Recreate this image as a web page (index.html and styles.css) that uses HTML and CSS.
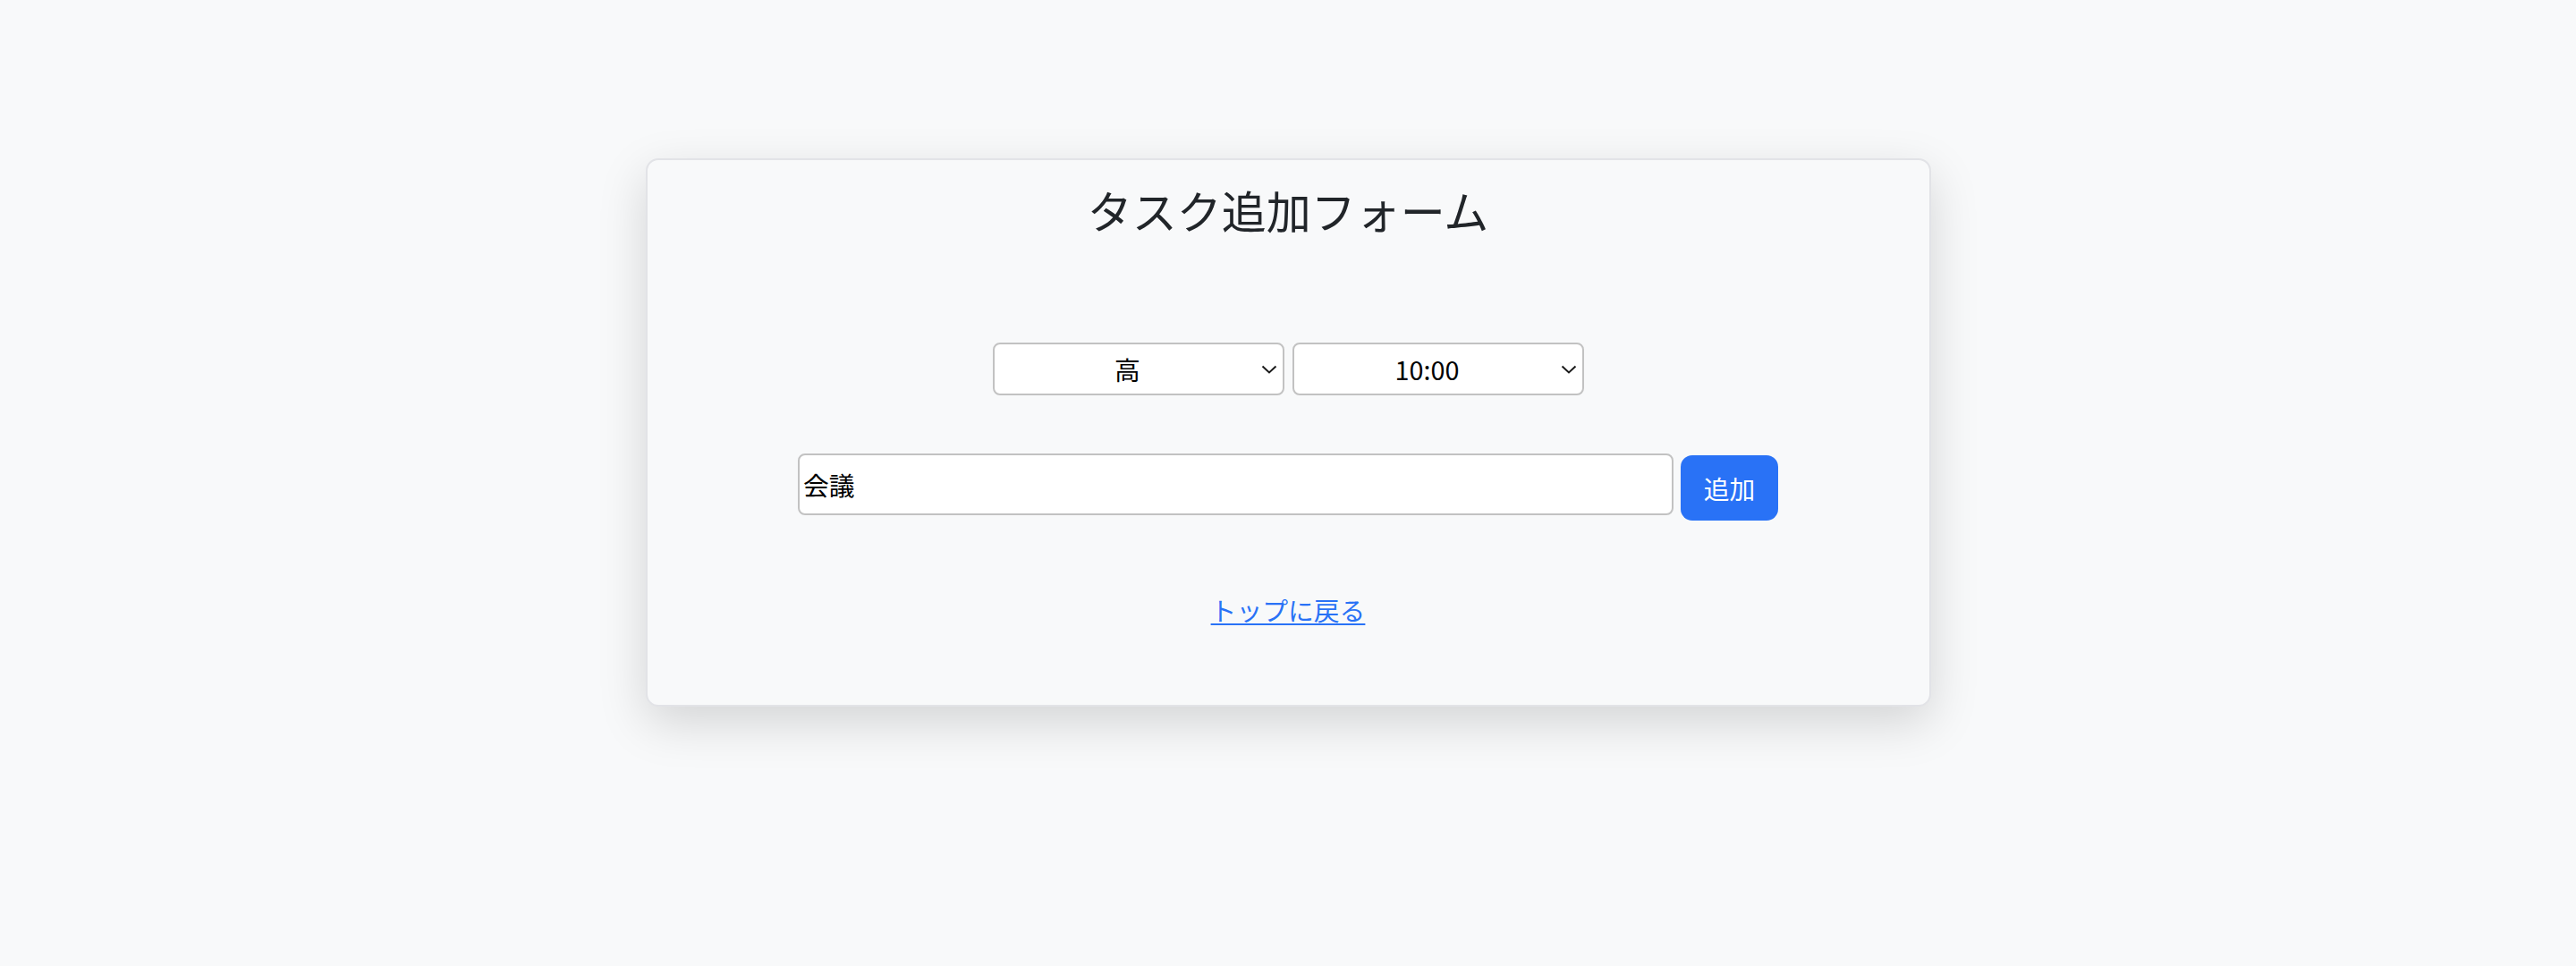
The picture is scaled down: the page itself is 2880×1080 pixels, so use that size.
FILE: index.html
```html
<!DOCTYPE html>
<html lang="ja">
<head>
<meta charset="utf-8">
<title>タスク追加フォーム</title>
<link rel="stylesheet" href="styles.css">
</head>
<body>
<main class="card">
  <h1 class="title">タスク追加フォーム</h1>
  <form class="task-form">
    <div class="select-row">
      <span class="select-wrap">
        <select class="select" name="priority">
          <option selected>高</option>
          <option>中</option>
          <option>低</option>
        </select>
        <svg class="chevron" viewBox="0 0 18 10" aria-hidden="true"><path d="M1.5 1.5 L9 8.5 L16.5 1.5" /></svg>
      </span>
      <span class="select-wrap">
        <select class="select" name="time">
          <option>09:00</option>
          <option selected>10:00</option>
          <option>11:00</option>
        </select>
        <svg class="chevron" viewBox="0 0 18 10" aria-hidden="true"><path d="M1.5 1.5 L9 8.5 L16.5 1.5" /></svg>
      </span>
    </div>
    <div class="add-row">
      <input class="task-input" type="text" value="会議">
      <button class="add-btn" type="button">追加</button>
    </div>
  </form>
  <p class="back"><a href="#" class="back-link">トップに戻る</a></p>
</main>
</body>
</html>
```

FILE: styles.css
```css
* {
  box-sizing: border-box;
}

html, body {
  margin: 0;
  padding: 0;
}

html {
  background: #f8f9fa;
}

body {
  min-height: 100vh;
  padding: 177px 0 120px;
  background: #f8f9fa;
  font-family: "Noto Sans CJK JP", "Noto Sans", sans-serif;
  font-size: 28.8px;
  color: #212529;
}

.card {
  width: 1437px;
  margin: 0 auto;
  padding: 25px 0 85px;
  background: #f8f9fa;
  border: 2px solid #e2e3e7;
  border-radius: 14px;
  box-shadow: 0 18px 54px rgba(0, 0, 0, 0.15);
  display: flex;
  flex-direction: column;
  align-items: center;
}

.title {
  margin: 0;
  font-size: 50px;
  line-height: 60px;
  font-weight: 400;
  color: #212529;
  text-align: center;
}

.task-form {
  display: flex;
  flex-direction: column;
  align-items: center;
}

.select-row {
  margin-top: 119px;
  display: flex;
  gap: 9px;
}

.select-wrap {
  position: relative;
  display: block;
}

.select {
  appearance: none;
  -webkit-appearance: none;
  width: 326px;
  height: 59px;
  margin: 0;
  padding: 0 28px 0 4px;
  border: 2px solid #c2c2c2;
  border-radius: 8px;
  background: #ffffff;
  color: #000000;
  font-family: inherit;
  font-size: 28.8px;
  text-align: center;
  text-align-last: center;
}

.chevron {
  position: absolute;
  right: 8px;
  top: 25px;
  width: 18px;
  height: 10px;
  pointer-events: none;
  fill: none;
  stroke: #1a1a1a;
  stroke-width: 2;
}

.add-row {
  margin-top: 65px;
  display: flex;
  align-items: flex-start;
  gap: 8px;
}

.task-input {
  width: 979px;
  height: 69px;
  margin: 0;
  padding: 0 4px;
  border: 2px solid #c2c2c2;
  border-radius: 8px;
  background: #ffffff;
  color: #000000;
  font-family: inherit;
  font-size: 28.8px;
}

.add-btn {
  margin-top: 2px;
  width: 109px;
  height: 73px;
  padding: 0;
  border: none;
  border-radius: 13px;
  background: #2972f6;
  color: #ffffff;
  font-family: inherit;
  font-size: 28.8px;
}

.back {
  margin: 78px 0 0;
  line-height: 43px;
  text-align: center;
}

.back-link {
  color: #2972f6;
  text-decoration: underline;
  text-underline-offset: 3px;
}
```
